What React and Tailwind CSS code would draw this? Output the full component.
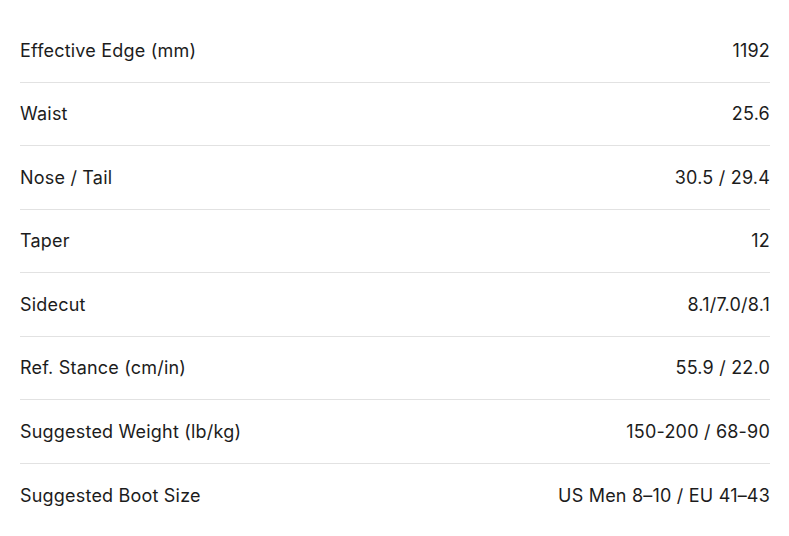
const specs = [
  ["Effective Edge (mm)", "1192"],
  ["Waist", "25.6"],
  ["Nose / Tail", "30.5 / 29.4"],
  ["Taper", "12"],
  ["Sidecut", "8.1/7.0/8.1"],
  ["Ref. Stance (cm/in)", "55.9 / 22.0"],
  ["Suggested Weight (lb/kg)", "150-200 / 68-90"],
  ["Suggested Boot Size", "US Men 8–10 / EU 41–43"],
];

export default function App() {
  return (
    <div className="min-h-screen bg-white pt-[19px] pl-5 pr-[19px] font-['Inter',sans-serif] text-[18px] tracking-[0.2px] text-[#1c1c1c]">
      {specs.map(([label, value], i) => (
        <div
          key={label}
          className={`flex h-[63.5px] items-center justify-between ${i < specs.length - 1 ? "border-b border-[#e2e2e2]" : ""}`}
        >
          <span>{label}</span>
          <span>{value}</span>
        </div>
      ))}
    </div>
  );
}
